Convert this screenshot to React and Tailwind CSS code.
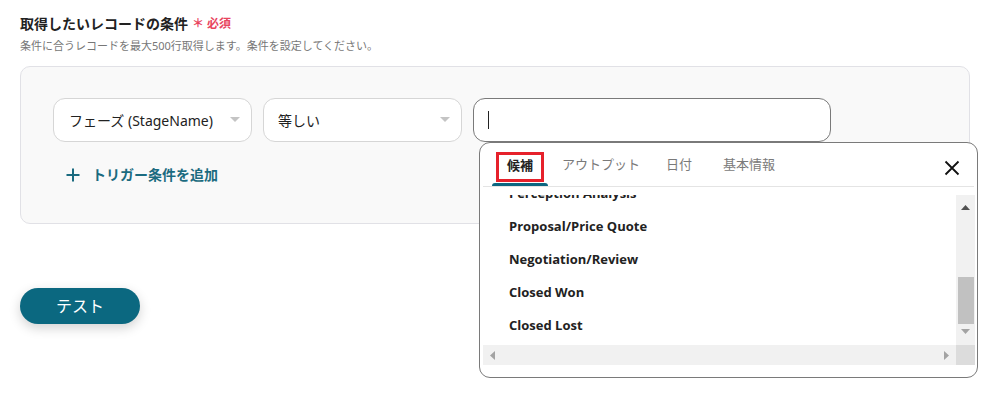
import React from 'react';

const items = [
  'Perception Analysis',
  'Proposal/Price Quote',
  'Negotiation/Review',
  'Closed Won',
  'Closed Lost',
];

const tabs = ['候補', 'アウトプット', '日付', '基本情報'];

const Caret = () => (
  <svg width="10" height="6" viewBox="0 0 10 6" className="shrink-0">
    <path d="M0 0 L10 0 L5 5 Z" fill="#c4c4c4" />
  </svg>
);

const SuggestPopup = () => (
  <div className="absolute left-[6px] top-[44px] z-10 w-[499px] h-[236px] bg-white border border-[#7a7a7a] rounded-[11px] px-[3px]">
    {/* tabs */}
    <div className="relative flex items-end h-[44px] border-b border-[#e4e4e4]">
      <div className="relative ml-[9px] w-[56px] h-full flex items-center justify-center">
        <span className="text-[13px] font-bold text-[#222] mt-[2px]">候補</span>
        <div className="absolute left-[4px] top-[9px] w-[48px] h-[30px] border-[3px] border-[#e6212b]" />
        <div className="absolute left-0 bottom-0 w-[56px] h-[3px] bg-[#0c6680] rounded-t-[3px]" />
      </div>
      {tabs.slice(1).map((t, i) => (
        <div
          key={t}
          className={`h-full flex items-center text-[13px] text-[#7a7a7a] mt-[2px] ${
            i === 0 ? 'ml-[14px]' : i === 1 ? 'ml-[26px]' : 'ml-[31px]'
          }`}
        >
          {t}
        </div>
      ))}
      <button className="absolute right-[13px] top-[16px] w-[18px] h-[18px] flex items-center justify-center">
        <svg width="16" height="16" viewBox="0 0 16 16">
          <path d="M1.5 1.5 L14.5 14.5 M14.5 1.5 L1.5 14.5" stroke="#111" strokeWidth="1.8" fill="none" />
        </svg>
      </button>
    </div>

    {/* list area with drawn scrollbars */}
    <div className="mt-[8px] flex flex-col w-[492px]">
      <div className="flex h-[150px]">
        <div className="flex-1 overflow-hidden">
          <ul className="-mt-[18px] pl-[26px]">
            {items.map((it) => (
              <li
                key={it}
                className="h-[33px] flex items-center text-[13px] font-bold text-[#222] font-['Open_Sans',sans-serif]"
              >
                {it}
              </li>
            ))}
          </ul>
        </div>
        <div className="w-[19px] bg-[#f1f1f1] flex flex-col items-center">
          <svg width="9" height="5" viewBox="0 0 9 5" className="mt-[10px]">
            <path d="M0 5 L9 5 L4.5 0 Z" fill="#505050" />
          </svg>
          <div className="mt-[67px] w-[16px] h-[47px] bg-[#c1c1c1]" />
          <svg width="9" height="5" viewBox="0 0 9 5" className="mt-[5px]">
            <path d="M0 0 L9 0 L4.5 5 Z" fill="#a3a3a3" />
          </svg>
        </div>
      </div>
      <div className="flex h-[20px]">
        <div className="flex-1 bg-[#f1f1f1] flex items-center justify-between px-[7px]">
          <svg width="5" height="9" viewBox="0 0 5 9">
            <path d="M5 0 L5 9 L0 4.5 Z" fill="#a3a3a3" />
          </svg>
          <svg width="5" height="9" viewBox="0 0 5 9">
            <path d="M0 0 L0 9 L5 4.5 Z" fill="#a3a3a3" />
          </svg>
        </div>
        <div className="w-[19px] bg-[#dcdcdc]" />
      </div>
    </div>
  </div>
);

export default function App() {
  return (
    <div className="w-[998px] h-[400px] bg-white pl-[20px] pt-[12px] font-['Noto_Sans','Noto_Sans_CJK_JP',sans-serif] text-[#222]">
      <div className="flex items-center gap-[4px]">
        <h2 className="text-[14px] font-bold text-[#222] leading-[22px]">取得したいレコードの条件</h2>
        <span className="text-[12px] font-bold text-[#e8455e] leading-[22px] mt-[1px]">＊ 必須</span>
      </div>
      <p className="mt-[3px] text-[11px] text-[#777] leading-[16px]">
        条件に合うレコードを最大500行取得します。条件を設定してください。
      </p>

      <div className="mt-[12px] w-[950px] h-[158px] bg-[#f9f9f9] border border-[#e1e1e6] rounded-[10px] pl-[32px] pt-[31px]">
        <div className="flex gap-[11px]">
          <div className="w-[199px] h-[44px] bg-white border border-[#d6d6d6] rounded-[12px] flex items-center justify-between pl-[15px] pr-[11px]">
            <span className="text-[14px] text-[#222]">フェーズ (StageName)</span>
            <Caret />
          </div>
          <div className="w-[199px] h-[44px] bg-white border border-[#d6d6d6] rounded-[12px] flex items-center justify-between pl-[14px] pr-[11px]">
            <span className="text-[14px] text-[#222]">等しい</span>
            <Caret />
          </div>
          <div className="relative">
            <div className="w-[358px] h-[44px] bg-white border border-[#7a7a7a] rounded-[12px] flex items-center pl-[14px]">
              <div className="w-[1px] h-[18px] bg-[#222]" />
            </div>
            <SuggestPopup />
          </div>
        </div>

        <button className="mt-[22px] ml-[13px] flex items-center gap-[12px] text-[#1b6b80]">
          <svg width="14" height="14" viewBox="0 0 14 14">
            <path d="M7 0.5 V13.5 M0.5 7 H13.5" stroke="#1b6b80" strokeWidth="2" />
          </svg>
          <span className="text-[14px] font-bold">トリガー条件を追加</span>
        </button>
      </div>

      <button className="mt-[64px] w-[120px] h-[36px] rounded-full bg-[#0b6880] text-white text-[16px] shadow-[0_4px_12px_rgba(0,0,0,0.18)] flex items-center justify-center">
        テスト
      </button>
    </div>
  );
}
